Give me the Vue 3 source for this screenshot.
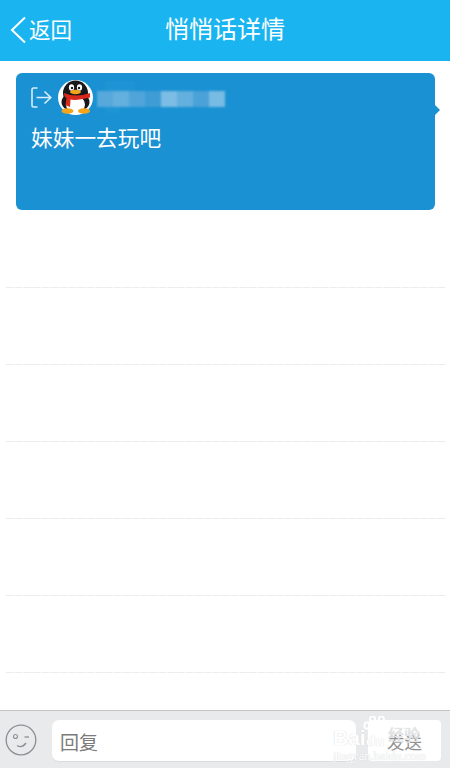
<template>
  <div class="page">
    <header class="top-bar">
      <div class="back">
        <svg class="back-icon" width="16" height="28" viewBox="0 0 16 28">
          <path d="M15 1.5 L2 14 L15 26.5" fill="none" stroke="#fff" stroke-width="2" />
        </svg>
        <span>返回</span>
      </div>
      <h1 class="title">悄悄话详情</h1>
    </header>

    <main class="content">
      <section class="note">
        <div class="note-head">
          <svg width="21" height="21" viewBox="0 0 21 21" class="exit-icon">
            <path d="M6.5 1 H2.5 Q1 1 1 2.5 V18.5 Q1 20 2.5 20 H6.5" fill="none" stroke="#d7eefa" stroke-width="1.6" />
            <path d="M5.5 10.5 H19.5 M13.5 4.5 L19.8 10.5 L13.5 16.5" fill="none" stroke="#d7eefa" stroke-width="1.6" />
          </svg>
          <svg class="avatar" width="35" height="35" viewBox="0 0 35 35">
            <circle cx="17.5" cy="17.5" r="17.5" fill="#fff" />
            <ellipse cx="17.5" cy="13" rx="12.5" ry="12.5" fill="#17171c" />
            <ellipse cx="17.5" cy="22" rx="14" ry="10" fill="#17171c" />
            <ellipse cx="17.5" cy="24.5" rx="9.5" ry="8.5" fill="#fff" />
            <ellipse cx="13.5" cy="7.5" rx="2.6" ry="3.3" fill="#fff" />
            <ellipse cx="21.5" cy="7.5" rx="2.6" ry="3.3" fill="#fff" />
            <circle cx="14" cy="8" r="1.2" fill="#17171c" />
            <circle cx="21" cy="8" r="1.2" fill="#17171c" />
            <ellipse cx="17.5" cy="12" rx="5.5" ry="2.2" fill="#f2a51a" />
            <path d="M6 13 Q17.5 18 32 13 L32 17.5 Q18 21 12.5 19.5 L12 27 L7.5 25 L8.5 18 Q6 17 6 13 Z" fill="#d8281c" />
            <ellipse cx="9.5" cy="31" rx="6" ry="2.8" fill="#f2a51a" />
            <ellipse cx="26" cy="31" rx="6" ry="2.8" fill="#f2a51a" />
          </svg>
          <div class="mosaic">
            <i v-for="(c, i) in mosaic" :key="i" :style="{ background: c }"></i>
            <b class="mosaic-up"></b>
            <b class="mosaic-down"></b>
          </div>
        </div>
        <p class="note-text">妹妹一去玩吧</p>
        <span class="note-arrow"></span>
      </section>

      <div class="rules">
        <div v-for="n in 6" :key="n" class="rule"></div>
      </div>
    </main>

    <footer class="reply-bar">
      <svg class="smiley" width="32" height="32" viewBox="0 0 32 32">
        <circle cx="16" cy="16" r="14.8" fill="none" stroke="#8d8f92" stroke-width="1.3" />
        <circle cx="10.5" cy="12.5" r="2" fill="none" stroke="#8d8f92" stroke-width="1.1" />
        <path d="M19.5 13 H24" stroke="#8d8f92" stroke-width="1.3" fill="none" />
        <path d="M12 21.5 Q17 24.5 21 19" stroke="#8d8f92" stroke-width="1.3" fill="none" />
      </svg>
      <div class="reply-input">回复</div>
      <div class="send-btn">发送</div>
      <div class="watermark">
        <svg class="paw" width="28" height="19" viewBox="0 0 44 30">
          <g fill="none" stroke="#fff" stroke-width="3">
            <ellipse cx="6" cy="15" rx="4" ry="5" />
            <ellipse cx="15" cy="5" rx="4" ry="4.5" />
            <ellipse cx="29" cy="5" rx="4" ry="4.5" />
            <ellipse cx="38" cy="15" rx="4" ry="5" />
            <path d="M10 28 C12 18 17 13 22 13 C27 13 32 18 34 28" />
          </g>
        </svg>
        <span class="wm-bai">Bai</span>
        <span class="wm-du">du</span>
        <span class="wm-jy">经验</span>
        <span class="wm-url">jingyan.baidu.com</span>
      </div>
    </footer>
  </div>
</template>

<script setup>
const mosaic = [
  '#57a9db', '#63afdd', '#4fa5d9', '#3f9cd5', '#7bbde4', '#63afdd', '#4aa2d8', '#78bce4'
]
</script>

<style>
html, body {
  margin: 0;
  background: #fff;
}
</style>

<style scoped>
.page {
  width: 450px;
  height: 768px;
  display: flex;
  flex-direction: column;
  overflow: hidden;
  font-family: "Noto Sans CJK SC", "Noto Sans", sans-serif;
  background: #fff;
}

.top-bar {
  height: 61px;
  flex: none;
  background: #1ab5f0;
  color: #fff;
  display: flex;
  align-items: center;
  justify-content: center;
  position: relative;
}

.back {
  position: absolute;
  left: 10px;
  top: 15px;
  display: flex;
  align-items: center;
  gap: 3px;
  font-size: 21.5px;
  line-height: 28px;
}

.back span {
  padding-bottom: 2px;
}

.title {
  margin: 0 0 5px;
  font-size: 24px;
  font-weight: 400;
  line-height: 34px;
}

.content {
  flex: 1;
  padding: 12px 5px 0 6px;
}

.note {
  position: relative;
  margin: 0 10px;
  height: 137px;
  box-sizing: border-box;
  background: #1a91d3;
  border-radius: 6px;
  padding: 7px 15px;
  color: #fff;
}

.note-head {
  display: flex;
  align-items: center;
  height: 35px;
}

.exit-icon {
  margin-right: 6px;
}

.avatar {
  flex: none;
  filter: blur(0.3px);
}

.mosaic {
  position: relative;
  display: flex;
  margin-left: 4px;
  margin-top: 2px;
  filter: blur(0.8px);
}

.mosaic i {
  width: 16px;
  height: 16px;
  display: block;
}

.mosaic-up {
  position: absolute;
  left: 8px;
  top: -10px;
  width: 30px;
  height: 10px;
  background: #1e94d4;
}

.mosaic-down {
  position: absolute;
  left: 8px;
  top: 16px;
  width: 15px;
  height: 6px;
  background: #1e94d4;
}

.note-text {
  margin: 6px 0 0;
  font-size: 21.7px;
  line-height: 32px;
}

.note-arrow {
  position: absolute;
  right: -5px;
  top: 32px;
  width: 0;
  height: 0;
  border-top: 5px solid transparent;
  border-bottom: 5px solid transparent;
  border-left: 5px solid #1a91d3;
}

.rules {
  display: flex;
  flex-direction: column;
  gap: 76px;
  padding-top: 77px;
}

.rule {
  height: 1px;
  background: repeating-linear-gradient(90deg, #ebecec 0 7px, #f5f5f5 7px 9px);
}

.reply-bar {
  position: relative;
  height: 58px;
  flex: none;
  box-sizing: border-box;
  background: #e9eaec;
  border-top: 1px solid #c6c6c6;
  display: flex;
  align-items: flex-start;
  padding: 9px 9px 0 5px;
}

.smiley {
  flex: none;
  margin: 4px 15px 0 0;
}

.reply-input {
  width: 304px;
  height: 42px;
  box-sizing: border-box;
  background: #fff;
  border-radius: 7px;
  border-bottom: 1px solid #dcdcdc;
  color: #7b7b7b;
  font-size: 19px;
  line-height: 43px;
  padding-left: 8px;
}

.send-btn {
  width: 73px;
  height: 41px;
  margin-left: 12px;
  background: #fff;
  border-radius: 4px;
  color: #8f8f8f;
  font-size: 17.5px;
  line-height: 43px;
  text-align: center;
}

.watermark {
  position: absolute;
  left: 330px;
  top: 2px;
  width: 120px;
  height: 56px;
  color: #fff;
  font-family: "Liberation Sans", sans-serif;
}

.paw {
  position: absolute;
  left: 33px;
  top: 3px;
}

.wm-bai,
.wm-du,
.wm-jy,
.wm-url {
  position: absolute;
  line-height: 1;
  text-shadow: 0 0 1px #c9cacc;
}

.wm-bai {
  left: 3px;
  top: 14px;
  font-size: 21px;
  font-weight: 700;
}

.wm-du {
  left: 36px;
  top: 20px;
  font-size: 15px;
  font-weight: 700;
}

.wm-jy {
  left: 58px;
  top: 13px;
  font-size: 16px;
  color: #e4e5e7;
  font-family: "Noto Sans CJK SC", sans-serif;
}

.wm-url {
  left: 3px;
  top: 37px;
  font-size: 12.5px;
  font-family: "Liberation Serif", serif;
}
</style>
